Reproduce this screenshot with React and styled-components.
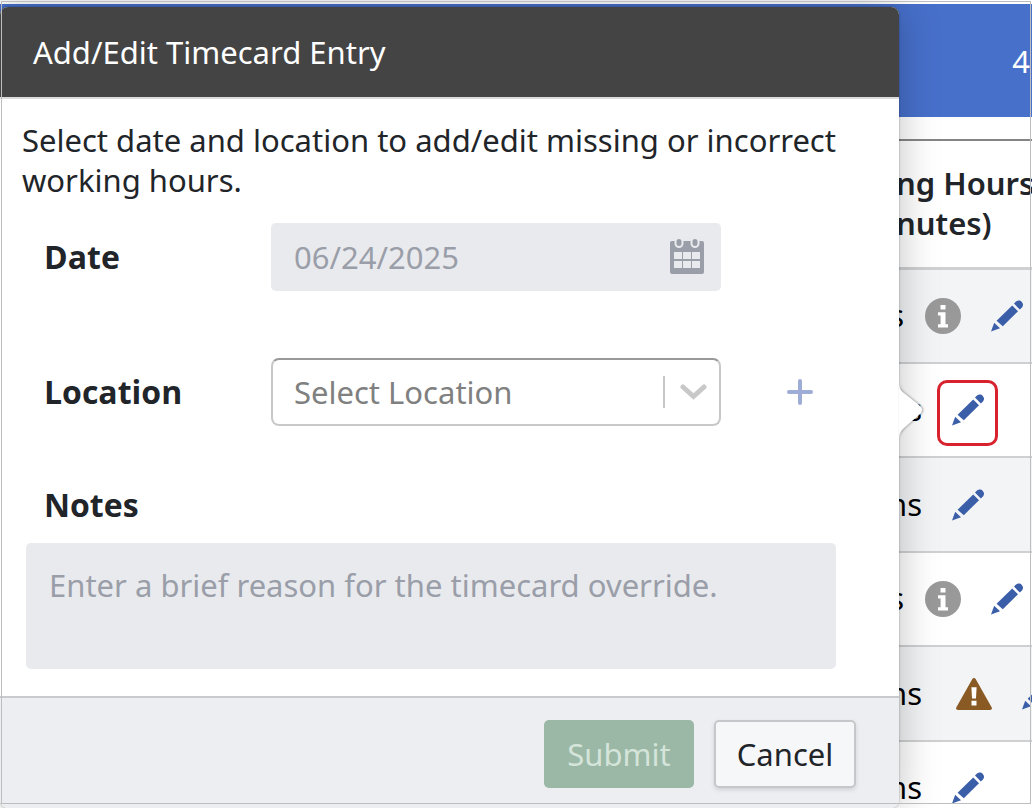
import React, { useState } from 'react';
import styled, { createGlobalStyle, css } from 'styled-components';

const GlobalStyle = createGlobalStyle`
  * {
    box-sizing: border-box;
  }

  body {
    margin: 0;
    background-color: #fff;
    color: #212529;
    font-family: 'Noto Sans', 'Open Sans', sans-serif;
    font-size: 31px;
    line-height: 40px;
    overflow: hidden;
  }

  button, input, select, textarea {
    font: inherit;
    color: inherit;
  }
`;

const Page = styled.div`
  position: relative;
  height: 100vh;
  padding-top: 4px;
  overflow: hidden;
`;

const Frame = styled.div`
  position: absolute;
  inset: 1px 1px 4px;
  border: 1px solid #bdbec0;
  pointer-events: none;
`;

const Banner = styled.header`
  display: flex;
  align-items: center;
  justify-content: flex-end;
  height: 113px;
  padding-right: 2px;
  background-color: #4770cb;
  color: #fff;
`;

const TableArea = styled.main`
  display: flex;
  justify-content: flex-end;
  margin-top: 22px;
`;

const Table = styled.table`
  width: 152px;
  table-layout: fixed;
  border-collapse: collapse;
  border-top: 2px solid #858585;

  th {
    height: 128px;
    padding: 0 0 2px 16px;
    border-bottom: 3px solid #cfd0d2;
    font-weight: 600;
    text-align: left;
    white-space: nowrap;
  }
`;

const Row = styled.tr`
  height: 94px;
  border-bottom: 2px solid #cfd0d2;

  &:nth-child(odd) {
    height: 95px;
    background-color: #f3f4f6;
  }

  td {
    padding: 0;
  }
`;

const Hours = styled.div`
  display: flex;
  align-items: center;
  color: #000;

  span {
    flex: none;
    width: ${({ $short }) => ($short ? '24px' : '42px')};
    padding-bottom: 2px;
    text-align: right;
  }

  svg {
    display: block;
    flex: none;
  }
`;

const Status = styled.div`
  flex: none;
  margin-left: ${({ $wide }) => ($wide ? '34px' : '21px')};
`;

const EditBtn = styled.button`
  position: relative;
  flex: none;
  margin-left: 30px;
  padding: 0;
  border: 0;
  background: none;
  cursor: pointer;

  ${({ $active }) => $active && css`
    &::after {
      content: '';
      position: absolute;
      inset: -14px -14px -20px -15px;
      border: 3px solid #d8232f;
      border-radius: 10px;
    }
  `}
`;

const Popover = styled.section`
  position: absolute;
  top: 7px;
  left: 0;
  width: calc(100% - 133px);
  border-radius: 8px;
  background-color: #fff;
  box-shadow: 0 0 2px rgba(0, 0, 0, 0.4), 0 0 40px rgba(0, 0, 0, 0.25);

  > header {
    height: 92px;
    padding: 25px 33px;
    border-bottom: 2px solid #dcdcdc;
    border-radius: 8px 8px 0 0;
    background-color: #444;
  }

  h1 {
    margin: 0;
    color: #fff;
    font-size: 31px;
    font-weight: 400;
  }
`;

const Arrow = styled.svg`
  position: absolute;
  top: 371px;
  left: 100%;
  filter: drop-shadow(1px 0 1px rgba(0, 0, 0, 0.35));
`;

const Body = styled.div`
  padding: 21px 22px 27px;

  > p {
    margin: 0 0 23px;
  }
`;

const Field = styled.div`
  display: grid;
  grid-template-columns: 227px 450px auto;
  justify-content: start;
  align-items: center;
  margin-bottom: ${({ $last }) => ($last ? '59px' : '67px')};
  padding-left: 22px;
`;

const Label = styled.label`
  font-family: 'Open Sans', 'Noto Sans', sans-serif;
  font-size: 32px;
  font-weight: 700;
`;

const Control = styled.div`
  display: grid;
  grid-template-columns: 1fr auto;
  align-items: center;

  svg {
    grid-area: 1 / 2;
    margin-right: 14px;
    pointer-events: none;
  }
`;

const DateInput = styled.input`
  grid-area: 1 / 1 / 2 / 3;
  width: 100%;
  height: 68px;
  padding: 0 23px;
  border: 0;
  border-radius: 5px;
  background-color: #e9eaee;
  color: #9a9ea8;
`;

const LocationSelect = styled.select`
  grid-area: 1 / 1 / 2 / 3;
  width: 100%;
  height: 68px;
  padding: 0 21px;
  appearance: none;
  border: 2px solid #c8c8c8;
  border-top-color: #999;
  border-radius: 8px;
  background-color: #fff;
  color: #808080;
`;

const AddBtn = styled.button`
  display: flex;
  margin-left: 65px;
  padding: 0;
  border: 0;
  background: none;
`;

const Notes = styled.div`
  padding: 0 41px 0 4px;

  label {
    display: block;
    margin-bottom: 18px;
    padding-left: 18px;
  }

  textarea {
    display: block;
    width: 100%;
    height: 126px;
    padding: 22px 23px;
    border: 0;
    border-radius: 5px;
    background-color: #e9eaee;
    resize: none;
  }

  textarea::placeholder {
    color: #9a9ea8;
  }
`;

const Footer = styled.footer`
  display: flex;
  justify-content: flex-end;
  gap: 20px;
  padding: 22px 43px 20px;
  border-top: 2px solid #c8cacd;
  border-radius: 0 0 8px 8px;
  background-color: #edeef2;
`;

const Button = styled.button`
  width: 142px;
  height: 68px;
  padding: 0;
  border: 2px solid #c6c7ca;
  border-radius: 5px;
  background-color: #f6f7f9;
  box-shadow: 0 2px 4px rgba(0, 0, 0, 0.12);

  &.submit {
    width: 150px;
    border: 0;
    background-color: #9ab8a5;
    box-shadow: none;
    color: #d5e4da;
  }
`;

const PencilIcon = () => (
  <svg width="32" height="32" viewBox="0 0 32 32" fill="#3b5ea9">
    <path d="M0 31.5 3.2 22.8 9 28.2Z" />
    <path d="M5.6 20.8 21.2 5.4 27 11.2 11.8 26.2Z" />
    <path d="M23 3.6 25 1.6C27 0 29.4.4 30.8 2 32.4 3.6 32.4 6 31 7.4L28.8 9.6Z" />
  </svg>
);

const InfoIcon = () => (
  <svg width="36" height="36" viewBox="0 0 36 36">
    <circle cx="18" cy="18" r="18" fill="#999" />
    <path fill="#fff" d="M15.5 7h5v4.6h-5zM13 14.2h7.5v12H23v3.2H13v-3.2h2.6v-8.8H13z" />
  </svg>
);

const WarningIcon = () => (
  <svg width="36" height="32" viewBox="0 0 36 32">
    <path fill="#8a5a24" d="M16.2 1.2c.8-1.6 2.8-1.6 3.6 0l15.8 28c.8 1.4 0 2.8-1.6 2.8H2c-1.6 0-2.4-1.4-1.6-2.8z" />
    <path fill="#fff" d="M15.4 9.2h5.2l-.6 11.4h-4zM15.5 22.8h5v4.6h-5z" />
  </svg>
);

const CalendarIcon = () => (
  <svg width="37" height="37" viewBox="0 0 37 37">
    <path fill="#9a9ea8" d="M2 2h30q2 0 2 2v29q0 2-2 2H2q-2 0-2-2V4q0-2 2-2z" />
    <path fill="#e9eaee" d="M4 13h8v7H4zM13 13h8v7h-8zM22 13h8v7h-8zM4 22h8v7H4zM13 22h8v7h-8zM22 22h8v7h-8z" />
    <g fill="#9a9ea8" stroke="#e9eaee" strokeWidth="2">
      <rect x="5.5" y="-1" width="7" height="9" rx="3.5" />
      <rect x="21.5" y="-1" width="7" height="9" rx="3.5" />
    </g>
  </svg>
);

const SelectIcon = () => (
  <svg width="44" height="34" viewBox="0 0 44 34" fill="none" stroke="#c8c8c8">
    <path strokeWidth="2" d="M1 1v32" />
    <path strokeWidth="5" strokeLinecap="round" d="M20 12 30.5 21.5 41 12" />
  </svg>
);

const PlusIcon = () => (
  <svg width="28" height="28" viewBox="0 0 28 28" stroke="#9dadd6" strokeWidth="4" strokeLinecap="round">
    <path d="M14 3v22M3 14h22" />
  </svg>
);

const rows = [
  { id: 1, text: 's', status: 'info' },
  { id: 2, text: 'ns', active: true },
  { id: 3, text: 'ns' },
  { id: 4, text: 's', status: 'info' },
  { id: 5, text: 'ns', status: 'warning' },
  { id: 6, text: 'ns' },
];

const App = () => {
  const [location, setLocation] = useState('');

  return (
    <Page>
      <GlobalStyle />
      <Banner>4</Banner>
      <TableArea>
        <Table>
          <thead>
            <tr>
              <th>ng Hours<br />nutes)</th>
            </tr>
          </thead>
          <tbody>
            {rows.map(row => (
              <Row key={row.id}>
                <td>
                  <Hours $short={row.status === 'info'}>
                    <span>{row.text}</span>
                    {row.status &&
                      <Status $wide={row.status === 'warning'}>
                        {row.status === 'info' ? <InfoIcon /> : <WarningIcon />}
                      </Status>
                    }
                    <EditBtn type="button" aria-label="Edit" $active={row.active}>
                      <PencilIcon />
                    </EditBtn>
                  </Hours>
                </td>
              </Row>
            ))}
          </tbody>
        </Table>
      </TableArea>

      <Popover>
        <header>
          <h1>Add/Edit Timecard Entry</h1>
        </header>
        <Arrow width="24" height="64" viewBox="0 0 24 64">
          <path fill="#fff" d="M0 2C0 10 1 12 5 15L20 27Q26 32 20 37L5 50C1 54 0 56 0 62Z" />
        </Arrow>
        <Body>
          <p>Select date and location to add/edit missing or incorrect working hours.</p>
          <Field>
            <Label htmlFor="date">Date</Label>
            <Control>
              <DateInput id="date" type="text" value="06/24/2025" readOnly />
              <CalendarIcon />
            </Control>
          </Field>
          <Field $last>
            <Label htmlFor="location">Location</Label>
            <Control>
              <LocationSelect id="location" value={location} onChange={e => setLocation(e.target.value)}>
                <option value="">Select Location</option>
              </LocationSelect>
              <SelectIcon />
            </Control>
            <AddBtn type="button" aria-label="Add location">
              <PlusIcon />
            </AddBtn>
          </Field>
          <Notes>
            <Label htmlFor="notes">Notes</Label>
            <textarea id="notes" placeholder="Enter a brief reason for the timecard override." />
          </Notes>
        </Body>
        <Footer>
          <Button type="submit" className="submit" disabled>Submit</Button>
          <Button type="button">Cancel</Button>
        </Footer>
      </Popover>
      <Frame />
    </Page>
  );
};

export default App;
